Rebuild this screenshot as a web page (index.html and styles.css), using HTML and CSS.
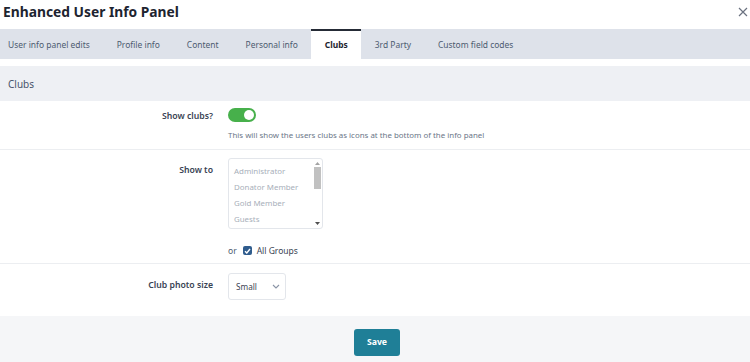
FILE: index.html
```html
<!DOCTYPE html>
<html>
<head>
<meta charset="utf-8">
<link rel="stylesheet" href="styles.css">
</head>
<body>
<div class="overlay">
  <div class="header">
    <h1 class="title">Enhanced User Info Panel</h1>
    <span class="close">
      <svg width="10" height="10" viewBox="0 0 10 10"><path d="M1 1L9 9M9 1L1 9" stroke="#6b7280" stroke-width="1.2" fill="none"/></svg>
    </span>
  </div>
  <div class="tabs">
    <span class="tab">User info panel edits</span>
    <span class="tab">Profile info</span>
    <span class="tab">Content</span>
    <span class="tab">Personal info</span>
    <span class="tab active">Clubs</span>
    <span class="tab">3rd Party</span>
    <span class="tab">Custom field codes</span>
  </div>
  <div class="body">
    <div class="section-head">Clubs</div>
    <div class="row row-toggle">
      <div class="label">Show clubs?</div>
      <div class="control">
        <span class="toggle"><span class="knob"></span></span>
        <div class="hint">This will show the users clubs as icons at the bottom of the info panel</div>
      </div>
    </div>
    <div class="row row-list">
      <div class="label">Show to</div>
      <div class="control">
        <div class="listbox">
          <div class="items">
            <div class="item">Administrator</div>
            <div class="item">Donator Member</div>
            <div class="item">Gold Member</div>
            <div class="item">Guests</div>
          </div>
          <div class="scrollbar">
            <svg class="arrow-up" width="5" height="3" viewBox="0 0 5 3"><path d="M0 3L2.5 0L5 3Z" fill="#a3a3a3"/></svg>
            <span class="thumb"></span>
            <svg class="arrow-down" width="5" height="3" viewBox="0 0 5 3"><path d="M0 0L2.5 3L5 0Z" fill="#505050"/></svg>
          </div>
        </div>
        <div class="or-line">
          <span class="or">or</span>
          <span class="checkbox">
            <svg width="7" height="6" viewBox="0 0 7 6"><path d="M1 3.2L2.8 5L6 1" stroke="#fff" stroke-width="1.4" fill="none"/></svg>
          </span>
          <span class="all">All Groups</span>
        </div>
      </div>
    </div>
    <div class="row row-select">
      <div class="label">Club photo size</div>
      <div class="control">
        <div class="select">
          <span>Small</span>
          <svg width="8" height="5" viewBox="0 0 8 5"><path d="M1 1L4 4L7 1" stroke="#8a94a6" stroke-width="1.1" fill="none"/></svg>
        </div>
      </div>
    </div>
  </div>
  <div class="footer">
    <button class="save">Save</button>
  </div>
</div>
</body>
</html>
```
FILE: styles.css
```css
html, body {
  margin: 0;
  padding: 0;
  background: #fff;
}
body {
  font-family: "Noto Sans", "Open Sans", sans-serif;
  color: #141414;
}
.overlay {
  width: 750px;
  height: 362px;
  display: flex;
  flex-direction: column;
}
.header {
  height: 29px;
  display: flex;
  align-items: center;
  justify-content: space-between;
  padding: 0 2px 0 3px;
}
.title {
  margin: 0;
  font-size: 13.8px;
  font-weight: 700;
  color: #1d2430;
  line-height: 1;
  margin-top: -5px;
}
.close {
  display: flex;
  margin-top: -6px;
}
.tabs {
  height: 30px;
  background: #dee2ea;
  display: flex;
  align-items: stretch;
}
.tab {
  display: flex;
  align-items: center;
  padding: 0 13.5px;
  font-size: 8.45px;
  color: #4d5b70;
}
.tab:first-child {
  padding-left: 8px;
}
.tab.active {
  background: #fff;
  border-top: 2px solid #252b36;
  font-weight: 700;
  color: #1d2430;
  padding-bottom: 2px;
}
.body {
  flex: 1;
  padding-top: 7px;
  display: flex;
  flex-direction: column;
}
.section-head {
  height: 35px;
  background: #eef0f4;
  display: flex;
  align-items: center;
  padding-left: 8px;
  font-size: 10px;
  color: #47536a;
}
.row {
  display: grid;
  grid-template-columns: 213px 1fr;
  column-gap: 15px;
  border-bottom: 1px solid #eceef1;
}
.row:last-child {
  border-bottom: none;
}
.label {
  text-align: right;
  font-size: 8.7px;
  font-weight: 600;
  color: #3a4454;
}
.row-toggle {
  padding: 7px 0 9px;
  height: 49px;
  box-sizing: border-box;
}
.row-toggle .label {
  padding-top: 2px;
}
.toggle {
  display: block;
  width: 28px;
  height: 14px;
  border-radius: 7px;
  background: #47b04b;
  position: relative;
}
.knob {
  position: absolute;
  right: 2px;
  top: 2px;
  width: 10px;
  height: 10px;
  border-radius: 50%;
  background: #fff;
}
.hint {
  margin-top: 8px;
  font-size: 7.9px;
  color: #6b7688;
}
.row-list {
  padding: 8px 0 0;
  height: 114px;
  box-sizing: border-box;
}
.row-list .label {
  padding-top: 6px;
}
.listbox {
  width: 95px;
  height: 71px;
  box-sizing: border-box;
  border: 1px solid #e3e6eb;
  border-radius: 3px;
  display: flex;
  overflow: hidden;
}
.items {
  flex: 1;
  padding: 4px 0 0 5px;
}
.item {
  font-size: 7.9px;
  color: #a8afba;
  height: 16px;
  line-height: 16px;
}
.scrollbar {
  width: 10px;
  display: flex;
  flex-direction: column;
  align-items: center;
  padding-top: 3px;
}
.thumb {
  display: block;
  width: 7px;
  height: 22px;
  background: #c1c1c1;
  margin-top: 2px;
}
.arrow-down {
  margin-top: auto;
  margin-bottom: 3px;
}
.or-line {
  display: flex;
  align-items: center;
  margin-top: 16px;
  font-size: 8.5px;
  color: #4d5b70;
}
.or {
  margin-right: 6px;
}
.checkbox {
  width: 9px;
  height: 9px;
  border-radius: 2px;
  background: #2f5c8d;
  display: flex;
  align-items: center;
  justify-content: center;
  margin-right: 5px;
}
.all {
  color: #3a4454;
}
.row-select {
  padding: 9px 0 0;
  height: 52px;
  box-sizing: border-box;
}
.row-select .label {
  padding-top: 6px;
}
.select {
  width: 58px;
  height: 27px;
  box-sizing: border-box;
  border: 1px solid #e3e6eb;
  border-radius: 3px;
  display: flex;
  align-items: center;
  justify-content: space-between;
  padding: 0 5px 0 7px;
  font-size: 8.2px;
  color: #3a4454;
}
.footer {
  height: 46px;
  box-sizing: border-box;
  background: #f5f6f8;
  display: flex;
  align-items: center;
  justify-content: center;
  padding: 6px 0 0 4px;
}
.save {
  width: 46px;
  height: 27px;
  border: none;
  border-radius: 3px;
  background: #1f7f97;
  color: #fff;
  font-family: inherit;
  font-size: 8.7px;
  font-weight: 700;
  padding: 0;
}
```
